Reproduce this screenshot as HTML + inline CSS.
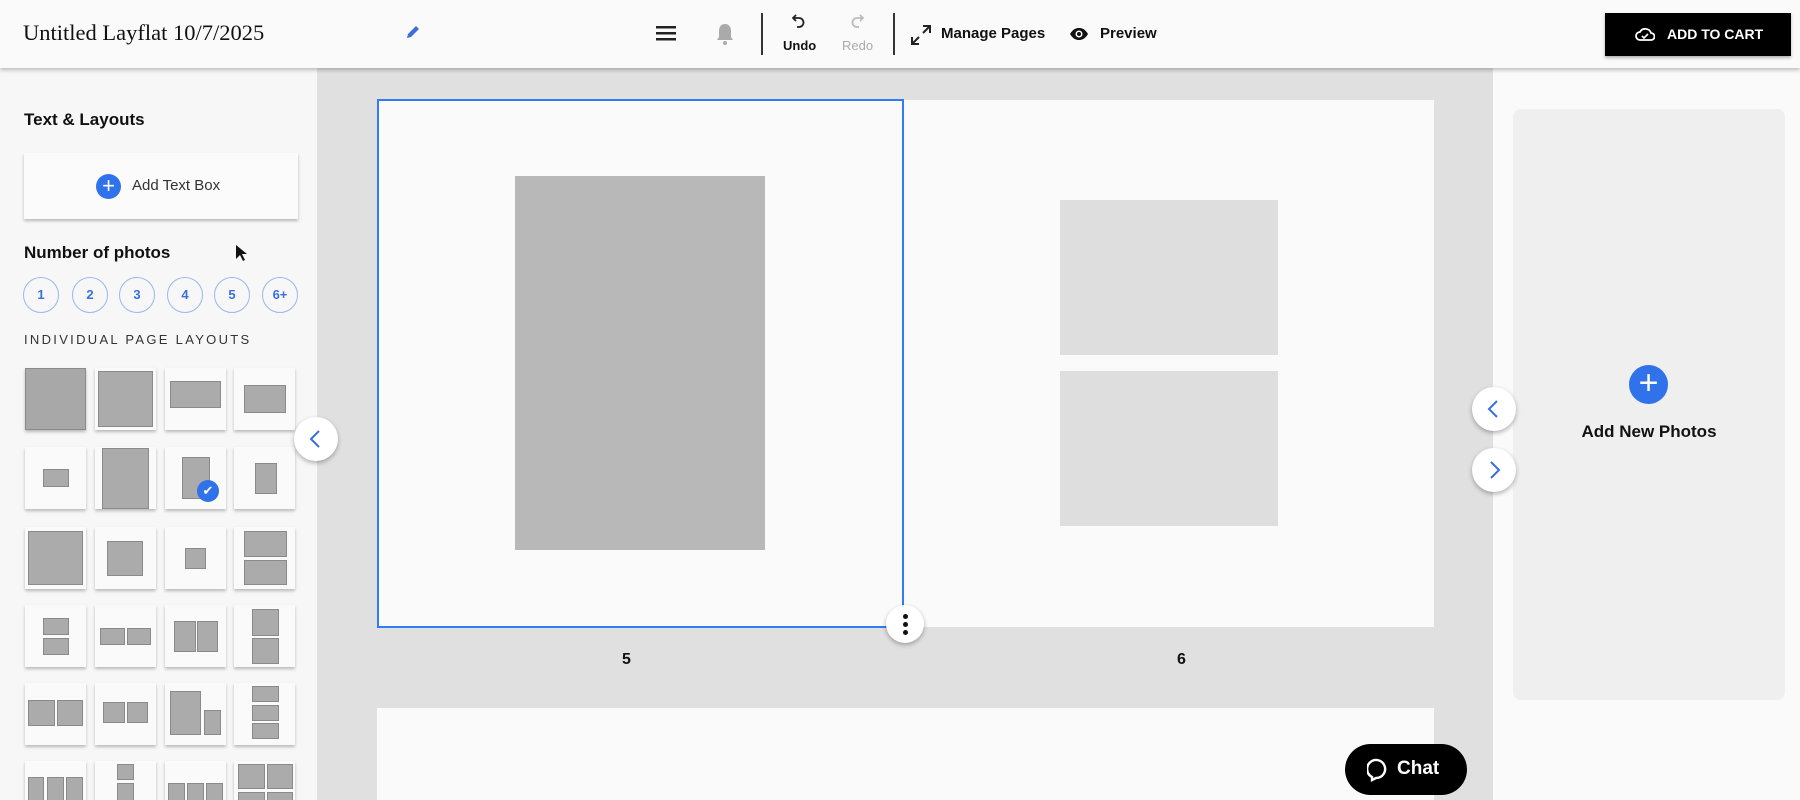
<!DOCTYPE html>
<html><head><meta charset="utf-8"><style>
*{box-sizing:border-box;margin:0;padding:0}
html,body{width:1800px;height:800px;overflow:hidden}
body{background:#e0e0e0;font-family:"Liberation Sans",sans-serif;color:#111}
#wrap{position:relative;width:1800px;height:800px;overflow:hidden}
.a{position:absolute}
#hdr{left:0;top:0;width:1800px;height:68px;background:#fafafa;box-shadow:0 2px 4px rgba(0,0,0,.25);z-index:5}
#side{left:0;top:68px;width:317px;height:732px;background:#f7f7f7;overflow:hidden}
#right{left:1493px;top:68px;width:307px;height:732px;background:#fafafa}
.tile{position:absolute;width:61px;height:62px;background:#fafafa;box-shadow:0 2px 3px rgba(0,0,0,.25)}
.r{position:absolute;background:#ababab;border:1px solid #8a8a8a}
.c{position:absolute;width:36px;height:36px;border:1px solid #9bb6ee;border-radius:50%;color:#3b6fd9;font-size:13px;font-weight:bold;text-align:center;line-height:34px;top:277px}
.circ{position:absolute;border-radius:50%;background:#fff;box-shadow:0 2px 5px rgba(0,0,0,.3)}
</style></head><body><div id="wrap">
<div id="hdr" class="a">
  <div class="a" style="left:23px;top:20px;font-family:'Liberation Serif',serif;font-size:22.5px;color:#111">Untitled Layflat 10/7/2025</div>
  <svg class="a" style="left:405px;top:24px" width="16" height="16" viewBox="0 0 16 16"><path d="M2 14l1-4 8-8 3 3-8 8z" fill="#3b6fd9"/></svg>
  <svg class="a" style="left:656px;top:25px" width="20" height="16"><rect y="1" width="20" height="2.5" fill="#222"/><rect y="7" width="20" height="2.5" fill="#222"/><rect y="13" width="20" height="2.5" fill="#222"/></svg>
  <svg class="a" style="left:716px;top:23px" width="18" height="22" viewBox="0 0 18 22"><path d="M9 1c-4 0-6 3-6 7v6l-2 3h16l-2-3V8c0-4-2-7-6-7z" fill="#aaa"/><circle cx="9" cy="20" r="2" fill="#aaa"/></svg>
  <div class="a" style="left:761px;top:13px;width:2px;height:42px;background:#333"></div>
  <svg class="a" style="left:792px;top:13px" width="14" height="16" viewBox="0 0 14 16"><path d="M4 2L1 5l3 3M1 5h6a4 4 0 0 1 0 9H5" fill="none" stroke="#222" stroke-width="1.8"/></svg>
  <div class="a" style="left:783px;top:38px;font-size:13px;font-weight:bold">Undo</div>
  <svg class="a" style="left:850px;top:13px" width="14" height="16" viewBox="0 0 14 16"><path d="M10 2l3 3-3 3M13 5H7a4 4 0 0 0 0 9h2" fill="none" stroke="#bbb" stroke-width="1.8"/></svg>
  <div class="a" style="left:842px;top:38px;font-size:13px;color:#aaa">Redo</div>
  <div class="a" style="left:893px;top:13px;width:2px;height:42px;background:#333"></div>
  <svg class="a" style="left:910px;top:24px" width="22" height="22" viewBox="0 0 22 22"><path d="M13 2h7v7M20 2l-7 7M2 13v7h7M2 20l7-7" fill="none" stroke="#222" stroke-width="2"/></svg>
  <div class="a" style="left:941px;top:25px;font-size:15px;font-weight:bold">Manage Pages</div>
  <svg class="a" style="left:1069px;top:27px" width="20" height="14" viewBox="0 0 20 14"><path d="M1 7c3-5 6-6 9-6s6 1 9 6c-3 5-6 6-9 6s-6-1-9-6z" fill="#111"/><circle cx="10" cy="7" r="3.5" fill="#fff"/><circle cx="10" cy="7" r="2" fill="#111"/></svg>
  <div class="a" style="left:1100px;top:25px;font-size:15px;font-weight:bold">Preview</div>
  <div class="a" style="left:1605px;top:13px;width:186px;height:43px;background:#000;box-shadow:0 2px 3px rgba(0,0,0,.3)"></div>
  <svg class="a" style="left:1635px;top:25px" width="20" height="18" viewBox="0 0 20 18"><path d="M5 15a4 4 0 0 1 0-8 6 6 0 0 1 11 1 3.5 3.5 0 0 1 0 7z" fill="none" stroke="#fff" stroke-width="1.8"/><path d="M7 11l2 2 4-4" fill="none" stroke="#fff" stroke-width="1.6"/></svg>
  <div class="a" style="left:1667px;top:26px;font-size:14px;font-weight:bold;color:#fff">ADD TO CART</div>
</div>

<div id="side" class="a">
  <div class="a" style="left:24px;top:42px;font-size:17px;font-weight:bold">Text &amp; Layouts</div>
  <div class="a" style="left:24px;top:85px;width:274px;height:66px;background:#fbfbfb;box-shadow:0 2px 3px rgba(0,0,0,.25)"></div>
  <div class="a" style="left:96px;top:106px;width:25px;height:25px;border-radius:50%;background:#3072ea;color:#fff;text-align:center;line-height:24px;font-size:22px">+</div>
  <div class="a" style="left:132px;top:109px;font-size:15px;color:#333">Add Text Box</div>
  <div class="a" style="left:24px;top:175px;font-size:17px;font-weight:bold">Number of photos</div>
  <svg class="a" style="left:235px;top:176px" width="12" height="18" viewBox="0 0 12 18"><path d="M1 1v14l4-4 3 6 2-1-3-6h5z" fill="#111"/></svg>
  <div class="a" style="left:24px;top:264px;font-size:13px;letter-spacing:2.3px;color:#333">INDIVIDUAL PAGE LAYOUTS</div>
</div>
<div class="c" style="left:23px">1</div><div class="c" style="left:72px">2</div><div class="c" style="left:119px">3</div><div class="c" style="left:167px">4</div><div class="c" style="left:214px">5</div><div class="c" style="left:262px">6+</div>

<div class="tile" style="left:25px;top:368px;background:#a8a8a8;border:1px solid #8a8a8a"></div>
<div class="tile" style="left:95px;top:368px"><div class="r" style="left:3px;top:3px;width:55px;height:56px"></div></div>
<div class="tile" style="left:165px;top:368px"><div class="r" style="left:5px;top:13px;width:51px;height:27px"></div></div>
<div class="tile" style="left:234px;top:368px"><div class="r" style="left:10px;top:17px;width:42px;height:28px"></div></div>

<div class="tile" style="left:25px;top:447px"><div class="r" style="left:18px;top:22px;width:26px;height:18px"></div></div>
<div class="tile" style="left:95px;top:447px"><div class="r" style="left:7px;top:1px;width:47px;height:61px"></div></div>
<div class="tile" style="left:165px;top:447px"><div class="r" style="left:17px;top:10px;width:28px;height:42px"></div><div class="a" style="left:32px;top:33px;width:22px;height:22px;border-radius:50%;background:#3072ea;color:#fff;font-size:13px;text-align:center;line-height:22px">✔</div></div>
<div class="tile" style="left:234px;top:447px"><div class="r" style="left:21px;top:16px;width:22px;height:31px"></div></div>

<div class="tile" style="left:25px;top:527px"><div class="r" style="left:3px;top:4px;width:55px;height:54px"></div></div>
<div class="tile" style="left:95px;top:527px"><div class="r" style="left:12px;top:14px;width:36px;height:35px"></div></div>
<div class="tile" style="left:165px;top:527px"><div class="r" style="left:20px;top:21px;width:21px;height:21px"></div></div>
<div class="tile" style="left:234px;top:527px"><div class="r" style="left:10px;top:4px;width:43px;height:26px"></div><div class="r" style="left:10px;top:33px;width:43px;height:25px"></div></div>

<div class="tile" style="left:25px;top:605px"><div class="r" style="left:18px;top:13px;width:26px;height:17px"></div><div class="r" style="left:18px;top:33px;width:26px;height:17px"></div></div>
<div class="tile" style="left:95px;top:605px"><div class="r" style="left:5px;top:23px;width:25px;height:17px"></div><div class="r" style="left:32px;top:23px;width:24px;height:17px"></div></div>
<div class="tile" style="left:165px;top:605px"><div class="r" style="left:9px;top:16px;width:22px;height:31px"></div><div class="r" style="left:32px;top:16px;width:21px;height:31px"></div></div>
<div class="tile" style="left:234px;top:605px"><div class="r" style="left:18px;top:4px;width:27px;height:27px"></div><div class="r" style="left:18px;top:33px;width:27px;height:26px"></div></div>

<div class="tile" style="left:25px;top:683px"><div class="r" style="left:3px;top:17px;width:27px;height:26px"></div><div class="r" style="left:32px;top:17px;width:26px;height:26px"></div></div>
<div class="tile" style="left:95px;top:683px"><div class="r" style="left:8px;top:19px;width:22px;height:21px"></div><div class="r" style="left:32px;top:19px;width:21px;height:21px"></div></div>
<div class="tile" style="left:165px;top:683px"><div class="r" style="left:5px;top:8px;width:31px;height:44px"></div><div class="r" style="left:39px;top:27px;width:17px;height:25px"></div></div>
<div class="tile" style="left:234px;top:683px"><div class="r" style="left:18px;top:3px;width:27px;height:16px"></div><div class="r" style="left:18px;top:22px;width:27px;height:16px"></div><div class="r" style="left:18px;top:40px;width:27px;height:16px"></div></div>

<div class="tile" style="left:25px;top:761px"><div class="r" style="left:3px;top:16px;width:16px;height:30px"></div><div class="r" style="left:22px;top:16px;width:17px;height:30px"></div><div class="r" style="left:41px;top:16px;width:17px;height:30px"></div></div>
<div class="tile" style="left:95px;top:761px"><div class="r" style="left:22px;top:3px;width:17px;height:16px"></div><div class="r" style="left:22px;top:22px;width:17px;height:20px"></div></div>
<div class="tile" style="left:165px;top:761px"><div class="r" style="left:3px;top:22px;width:17px;height:20px"></div><div class="r" style="left:22px;top:22px;width:17px;height:20px"></div><div class="r" style="left:41px;top:22px;width:17px;height:20px"></div></div>
<div class="tile" style="left:234px;top:761px"><div class="r" style="left:4px;top:3px;width:27px;height:25px"></div><div class="r" style="left:33px;top:3px;width:26px;height:25px"></div><div class="r" style="left:4px;top:31px;width:27px;height:20px"></div><div class="r" style="left:33px;top:31px;width:26px;height:20px"></div></div>

<div class="a" style="left:377px;top:100px;width:1057px;height:527px;background:#fafafa"></div>
<div class="a" style="left:377px;top:99px;width:527px;height:529px;border:2px solid #2f7cf6"></div>
<div class="a" style="left:515px;top:176px;width:250px;height:374px;background:#b8b8b8"></div>
<div class="a" style="left:1060px;top:200px;width:218px;height:155px;background:#dedede"></div>
<div class="a" style="left:1060px;top:371px;width:218px;height:155px;background:#dedede"></div>
<div class="circ" style="left:886px;top:605px;width:38px;height:38px"><div class="a" style="left:17px;top:9px;width:5px;height:5px;border-radius:50%;background:#111;box-shadow:0 8px 0 #111,0 16px 0 #111"></div></div>
<div class="a" style="left:622px;top:651px;font-size:16px;font-weight:bold">5</div>
<div class="a" style="left:1177px;top:651px;font-size:16px;font-weight:bold">6</div>
<div class="a" style="left:377px;top:708px;width:1057px;height:92px;background:#fafafa"></div>
<div class="circ" style="left:294px;top:417px;width:44px;height:44px"><svg class="a" style="left:14px;top:12px" width="14" height="20"><path d="M11 2L3 10l8 8" fill="none" stroke="#3b6fd9" stroke-width="2"/></svg></div>

<div id="right" class="a"></div>
<div class="a" style="left:1513px;top:109px;width:272px;height:591px;background:#efefef;border-radius:8px"></div>
<div class="circ" style="left:1472px;top:387px;width:44px;height:44px"><svg class="a" style="left:14px;top:12px" width="14" height="20"><path d="M11 2L3 10l8 8" fill="none" stroke="#3b6fd9" stroke-width="2"/></svg></div>
<div class="circ" style="left:1472px;top:448px;width:44px;height:44px"><svg class="a" style="left:16px;top:12px" width="14" height="20"><path d="M3 2l8 8-8 8" fill="none" stroke="#3b6fd9" stroke-width="2"/></svg></div>
<div class="a" style="left:1629px;top:365px;width:39px;height:39px;border-radius:50%;background:#3072ea;color:#fff;font-size:34px;text-align:center;line-height:37px">+</div>
<div class="a" style="left:1560px;top:422px;width:178px;text-align:center;font-size:17px;font-weight:bold">Add New Photos</div>

<div class="a" style="left:1345px;top:744px;width:122px;height:51px;border-radius:26px;background:#000"></div>
<svg class="a" style="left:1367px;top:758px" width="22" height="24" viewBox="0 0 22 24"><path d="M5 19a9 9 0 1 1 4 1l-4 2z" fill="none" stroke="#fff" stroke-width="2.4"/></svg>
<div class="a" style="left:1397px;top:758px;font-size:19px;font-weight:bold;color:#fff">Chat</div>
</div></body></html>
